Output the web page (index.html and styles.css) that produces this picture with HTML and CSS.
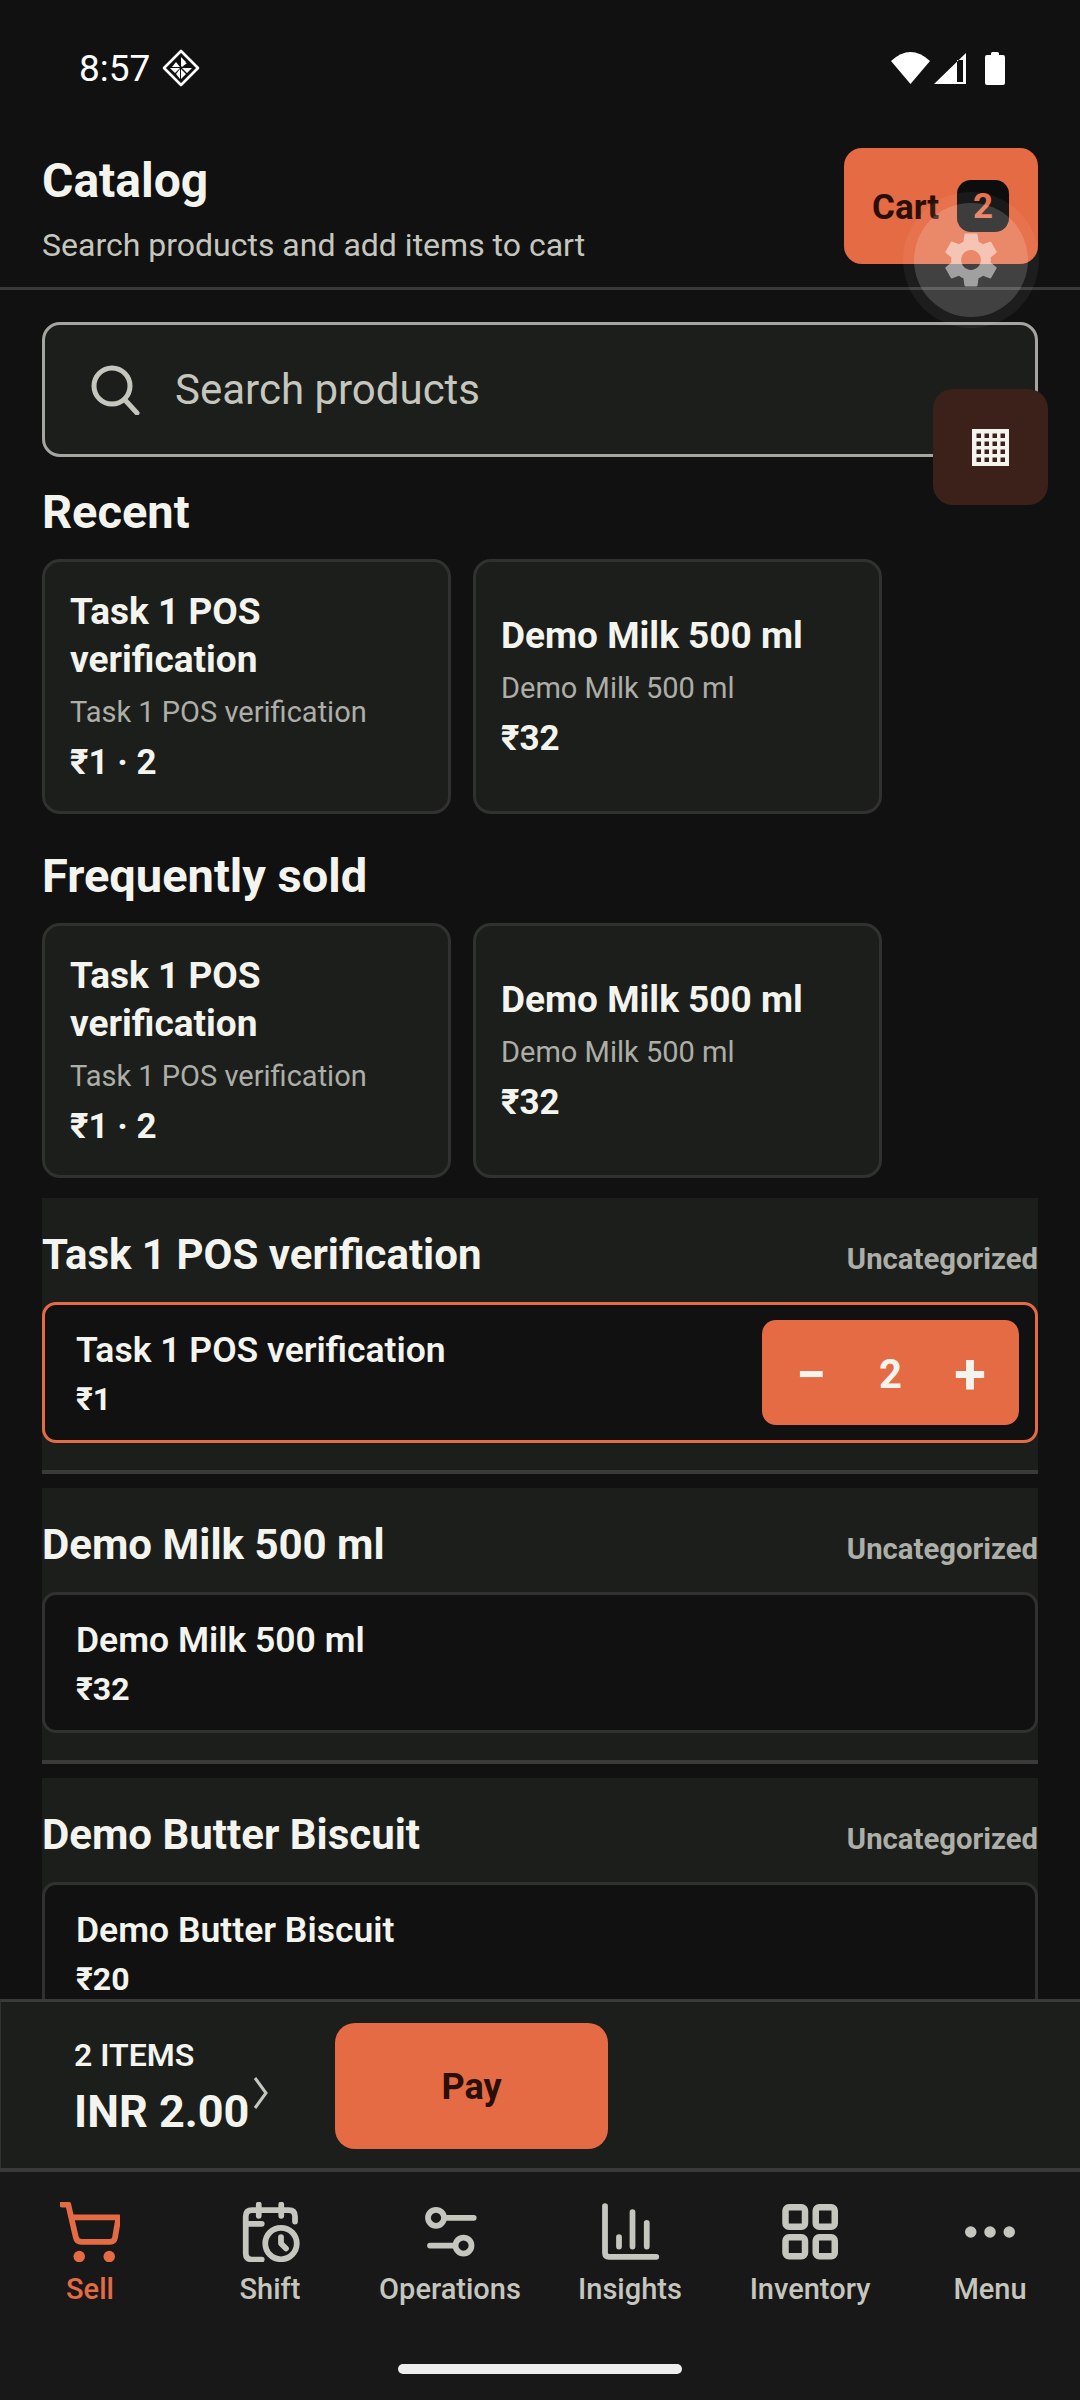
FILE: index.html
```html
<!DOCTYPE html>
<html>

<head>
    <title>Catalog</title>
    <link rel="stylesheet" href="styles.css">
</head>

<body>
    <div class="screen">
        <div class="status">
            <div class="status-left">
                <span class="clock">8:57</span>
                <svg class="status-logo" width="38" height="38" viewBox="0 0 38 38">
                    <path d="M19 2 36 19 19 36 2 19Z" fill="none" stroke="#fff" stroke-width="2.6" stroke-linejoin="round" />
                    <path d="M19 8 24 13 19 18ZM14 13 18 18H10ZM30 19 25 24 20 19ZM25 14 20 18V13ZM8 19H18L13 24ZM14 25 18 20V30ZM19 20 24 25 19 30Z" fill="#fff" />
                </svg>
            </div>
            <div class="status-right">
                <svg width="39" height="32" viewBox="0 0 39 32"><path d="M0 9Q19.5-9 39 9L19.5 32Z" fill="#fff" /></svg>
                <svg width="32" height="31" viewBox="0 0 32 31"><path d="M32 0V31H0ZM23 7V29H29V7Z" fill="#fff" fill-rule="evenodd" /></svg>
                <svg width="20" height="33" viewBox="0 0 20 33"><path d="M6 3V1.5Q6 0 7.500 0H12.500Q14 0 14 1.500V3H18Q20 3 20 5V31Q20 33 18 33H2Q0 33 0 31V5Q0 3 2 3Z" fill="#fff" /></svg>
            </div>
        </div>

        <header class="topbar">
            <div>
                <h1>Catalog</h1>
                <p class="subtitle">Search products and add items to cart</p>
            </div>
            <div class="cart-btn">
                <span>Cart</span>
                <span class="cart-count">2</span>
            </div>
        </header>

        <main class="content">
            <div class="search">
                <svg width="50" height="50" viewBox="0 0 50 50" fill="none" stroke="#c5c6be" stroke-width="5" stroke-linecap="round">
                    <circle cx="22" cy="21" r="18" />
                    <path d="M35 35 47 48" />
                </svg>
                <span>Search products</span>
            </div>

            <h2 class="shelf-title recent">Recent</h2>
            <div class="shelf">
                <div class="card">
                    <div class="card-name">Task 1 POS verification</div>
                    <div class="card-sub">Task 1 POS verification</div>
                    <div class="card-price">₹1 · 2</div>
                </div>
                <div class="card">
                    <div class="card-name">Demo Milk 500 ml</div>
                    <div class="card-sub">Demo Milk 500 ml</div>
                    <div class="card-price">₹32</div>
                </div>
            </div>

            <h2 class="shelf-title">Frequently sold</h2>
            <div class="shelf">
                <div class="card">
                    <div class="card-name">Task 1 POS verification</div>
                    <div class="card-sub">Task 1 POS verification</div>
                    <div class="card-price">₹1 · 2</div>
                </div>
                <div class="card">
                    <div class="card-name">Demo Milk 500 ml</div>
                    <div class="card-sub">Demo Milk 500 ml</div>
                    <div class="card-price">₹32</div>
                </div>
            </div>

            <section class="group">
                <div class="group-head">
                    <h3>Task 1 POS verification</h3>
                    <span>Uncategorized</span>
                </div>
                <div class="row row-active">
                    <div>
                        <div class="row-name">Task 1 POS verification</div>
                        <div class="row-price">₹1</div>
                    </div>
                    <div class="stepper">
                        <span class="step-minus">−</span>
                        <span class="step-num">2</span>
                        <span class="step-plus">+</span>
                    </div>
                </div>
            </section>

            <section class="group">
                <div class="group-head">
                    <h3>Demo Milk 500 ml</h3>
                    <span>Uncategorized</span>
                </div>
                <div class="row">
                    <div>
                        <div class="row-name">Demo Milk 500 ml</div>
                        <div class="row-price">₹32</div>
                    </div>
                </div>
            </section>

            <section class="group">
                <div class="group-head">
                    <h3>Demo Butter Biscuit</h3>
                    <span>Uncategorized</span>
                </div>
                <div class="row">
                    <div>
                        <div class="row-name">Demo Butter Biscuit</div>
                        <div class="row-price">₹20</div>
                    </div>
                </div>
            </section>
        </main>

        <div class="paybar">
            <div class="totals">
                <div class="totals-items">2 ITEMS</div>
                <div class="totals-amount">INR 2.00</div>
            </div>
            <svg class="chevron" width="18" height="32" viewBox="0 0 18 32" fill="none" stroke="#c5c6be" stroke-width="3">
                <path d="M3 1 14 16 3 31" />
            </svg>
            <div class="pay-btn">Pay</div>
        </div>

        <nav class="tabs">
            <div class="tab tab-on">
                <svg viewBox="0 0 24 24">
                    <path d="M.8 1H3.300L6.300 14Q6.700 15.900 8.500 15.900H20Q21.700 15.900 22 14.300L23.400 6.100H4.700" />
                    <circle class="dot" cx="7.700" cy="21.800" r="2.300" />
                    <circle class="dot" cx="19.700" cy="21.800" r="2.300" />
                </svg>
                <span>Sell</span>
            </div>
            <div class="tab">
                <svg viewBox="0 0 24 24">
                    <path d="M8.700 23H4.800Q2.300 23 2.300 20.500V5.700Q2.300 3.200 4.800 3.200H19.500Q22 3.200 22 5.700V7.800" />
                    <path d="M7.500 1V5.500M16.500 1V5.500M2.300 8.700H8.700" />
                    <circle cx="16.400" cy="16.600" r="6.300" />
                    <path d="M16.400 14V16.600L18.400 18.600" />
                </svg>
                <span>Shift</span>
            </div>
            <div class="tab">
                <svg viewBox="0 0 24 24">
                    <circle cx="6.400" cy="6.300" r="3.200" />
                    <path d="M10 6.300H21.500" />
                    <circle cx="17.400" cy="17.400" r="3.200" />
                    <path d="M4 17.400H14" />
                </svg>
                <span>Operations</span>
            </div>
            <div class="tab">
                <svg viewBox="0 0 24 24">
                    <path d="M2 1.600V20.300Q2 21.900 3.600 21.900H22.500" />
                    <path d="M7.600 14V17.800M13 4V17.800M18.700 8.300V17.800" />
                </svg>
                <span>Insights</span>
            </div>
            <div class="tab">
                <svg class="tab-grid" viewBox="0 0 24 24">
                    <rect x="2.200" y="2.100" width="7.800" height="7.800" rx="1.400" />
                    <rect x="14.300" y="2.100" width="7.600" height="7.800" rx="1.400" />
                    <rect x="2.200" y="14.100" width="7.800" height="7.600" rx="1.400" />
                    <rect x="14.300" y="14.100" width="7.600" height="7.600" rx="1.400" />
                </svg>
                <span>Inventory</span>
            </div>
            <div class="tab">
                <svg viewBox="0 0 24 24">
                    <circle class="dot" cx="4.300" cy="12" r="2.300" />
                    <circle class="dot" cx="12" cy="12" r="2.300" />
                    <circle class="dot" cx="19.700" cy="12" r="2.300" />
                </svg>
                <span>Menu</span>
            </div>
        </nav>

        <div class="home-bar"><div class="home-pill"></div></div>

        <!-- floating stuff on top of the page -->
        <div class="gear-fab">
            <div class="gear-inner">
                <svg width="66" height="66" viewBox="0 0 24 24">
                    <path d="M19.140 12.940c.04-.3.06-.61.06-.94 0-.32-.02-.64-.07-.94l2.030-1.580c.18-.14.23-.41.12-.61l-1.920-3.320c-.12-.22-.37-.29-.59-.22l-2.390.96c-.5-.38-1.030-.7-1.620-.94l-.36-2.540c-.04-.24-.24-.41-.48-.41h-3.840c-.24 0-.43.17-.47.41l-.36 2.540c-.59.24-1.130.57-1.620.94l-2.390-.96c-.22-.08-.47 0-.59.22L2.740 8.870c-.12.21-.08.47.12.61l2.030 1.580c-.05.3-.09.63-.09.94s.02.64.07.94l-2.030 1.580c-.18.14-.23.41-.12.61l1.920 3.320c.12.22.37.29.59.22l2.390-.96c.5.38 1.030.7 1.620.94l.36 2.540c.05.24.24.41.48.41h3.840c.24 0 .44-.17.47-.41l.36-2.540c.59-.24 1.130-.56 1.620-.94l2.390.96c.22.08.47 0 .59-.22l1.920-3.320c.12-.22.07-.47-.12-.61l-2.010-1.580zM12 15.600c-1.980 0-3.600-1.620-3.600-3.600s1.620-3.600 3.600-3.600 3.600 1.620 3.600 3.600-1.620 3.600-3.600 3.600z" fill="#fff" fill-opacity=".5" />
                </svg>
            </div>
        </div>
        <div class="grid-fab">
            <svg width="37" height="37" viewBox="0 0 37 37">
                <path fill="#f4f4ef" fill-rule="evenodd" d="M0 0H37V37H0ZM4.500 4.500V9H9V4.500ZM12.500 4.500V9H17V4.500ZM20.500 4.500V9H25V4.500ZM28.500 4.500V9H33V4.500ZM4.500 12.500V17H9V12.500ZM12.500 12.500V17H17V12.500ZM20.500 12.500V17H25V12.500ZM28.500 12.500V17H33V12.500ZM4.500 20.500V25H9V20.500ZM12.500 20.500V25H17V20.500ZM20.500 20.500V25H25V20.500ZM28.500 20.500V25H33V20.500ZM4.500 28.500V33H9V28.500ZM12.500 28.500V33H17V28.500ZM20.500 28.500V33H25V28.500ZM28.500 28.500V33H33V28.500Z" />
            </svg>
        </div>
    </div>
</body>

</html>
```

FILE: styles.css
```css
* {
    box-sizing: border-box;
}

html,
body {
    margin: 0;
    background: #111111;
}

.screen {
    position: relative;
    width: 1080px;
    height: 2400px;
    display: flex;
    flex-direction: column;
    overflow: hidden;
    background: #111111;
    color: #f4f4ef;
    font-family: Roboto, "Liberation Sans", sans-serif;
}

/* status bar */
.status {
    height: 100px;
    padding: 36px 75px 0 79px;
    display: flex;
    flex: none;
    justify-content: space-between;
}

.status-left,
.status-right {
    height: 64px;
    display: flex;
    align-items: center;
}

.status-left {
    gap: 12px;
}

.status-right {
    gap: 4px;
}

.status-right svg:last-child {
    margin-left: 15px;
}

.clock {
    font-size: 37px;
    color: #fff;
}

/* header */
.topbar {
    flex: none;
    height: 190px;
    padding: 48px 42px 23px;
    display: flex;
    justify-content: space-between;
    border-bottom: 3px solid #3a3b38;
}

h1 {
    margin: 6px 0 0;
    font-size: 48px;
    line-height: 54px;
    font-weight: 700;
}

.subtitle {
    margin: 18px 0 0;
    font-size: 32px;
    line-height: 38px;
    color: #c5c6be;
}

.cart-btn {
    width: 194px;
    height: 116px;
    padding: 2px 0 0 28px;
    display: flex;
    align-items: center;
    gap: 18px;
    background: #e56b45;
    border-radius: 18px;
    color: #2a0f08;
    font-size: 35px;
    font-weight: 700;
}

.cart-count {
    width: 52px;
    height: 52px;
    margin-top: -2px;
    display: flex;
    align-items: center;
    justify-content: center;
    border-radius: 14px;
    background: #0d0d0d;
    color: #e56b45;
}

/* scrolling part */
.content {
    flex: 1;
    min-height: 0;
    overflow: hidden;
    padding: 32px 42px 0;
}

.search {
    height: 135px;
    padding-left: 45px;
    display: flex;
    align-items: center;
    gap: 35px;
    background: #1c1e1b;
    border: 3px solid #a5a69f;
    border-radius: 18px;
    color: #c5c6be;
    font-size: 42px;
}

.shelf-title {
    margin: 36px 0 21px;
    font-size: 47px;
    line-height: 52px;
    font-weight: 700;
}

.shelf-title.recent {
    margin-top: 29px;
}

.shelf {
    display: flex;
    gap: 22px;
}

.card {
    width: 409px;
    height: 255px;
    padding: 0 25px;
    display: flex;
    flex-direction: column;
    justify-content: center;
    background: #1c1e1b;
    border: 3px solid #30322f;
    border-radius: 18px;
}

.card-name {
    font-size: 37px;
    line-height: 48px;
    font-weight: 700;
}

.card-sub {
    margin-top: 8px;
    font-size: 29px;
    line-height: 40px;
    color: #adaea7;
}

.card-price {
    margin-top: 9px;
    font-size: 35px;
    line-height: 44px;
    font-weight: 700;
}

.group {
    height: 276px;
    margin-top: 14px;
    background: #1c1e1b;
    border-bottom: 4px solid #3a3b38;
}

.shelf + .group {
    margin-top: 20px;
}

.group-head {
    height: 104px;
    padding-top: 29px;
    display: flex;
    justify-content: space-between;
    align-items: baseline;
}

h3 {
    margin: 0;
    font-size: 42px;
    line-height: 56px;
    font-weight: 700;
}

.group-head span {
    font-size: 29.3px;
    font-weight: 700;
    color: #adaea7;
}

.row {
    height: 141px;
    padding: 0 16px 0 31px;
    display: flex;
    align-items: center;
    justify-content: space-between;
    background: #111111;
    border: 3px solid #30322f;
    border-radius: 14px;
}

.row-active {
    border-color: #e56b45;
}

.row-name {
    font-size: 35.5px;
    line-height: 46px;
    font-weight: 600;
}

.row-price {
    margin-top: 7px;
    font-size: 32px;
    line-height: 38px;
    font-weight: 700;
}

.stepper {
    width: 257px;
    height: 105px;
    padding: 3px 29px 0;
    display: flex;
    align-items: center;
    justify-content: space-between;
    background: #e56b45;
    border-radius: 14px;
    font-weight: 700;
}

.stepper span {
    width: 40px;
    text-align: center;
}

.step-minus {
    font-size: 54px;
}

.step-plus {
    font-size: 58px;
}

.step-num {
    font-size: 40px;
}

/* pay bar */
.paybar {
    flex: none;
    height: 169px;
    padding-left: 73px;
    display: flex;
    align-items: center;
    background: #1c1e1b;
    border-top: 3px solid #3a3b38;
    border-left: 1px solid #30322f;
}

.totals {
    width: 178px;
    padding-top: 3px;
}

.totals-items {
    font-size: 32px;
    line-height: 40px;
    font-weight: 600;
}

.totals-amount {
    margin-top: 11px;
    font-size: 45px;
    line-height: 52px;
    font-weight: 700;
}

.chevron {
    margin-top: 16px;
}

.pay-btn {
    width: 273px;
    height: 126px;
    margin: 2px 0 0 65px;
    padding-top: 2px;
    display: flex;
    align-items: center;
    justify-content: center;
    background: #e56b45;
    border-radius: 20px;
    color: #2a0f08;
    font-size: 36px;
    font-weight: 700;
}

/* bottom nav */
.tabs {
    flex: none;
    height: 154px;
    display: flex;
    background: #181818;
    border-top: 4px solid #3a3b38;
}

.tab {
    width: 180px;
    padding-top: 30px;
    display: flex;
    flex-direction: column;
    align-items: center;
    color: #c5c6be;
    font-size: 29px;
    font-weight: 500;
}

.tab svg {
    width: 60px;
    height: 60px;
    margin-bottom: 10px;
    fill: none;
    stroke: #c5c6be;
    stroke-width: 2.300;
    stroke-linecap: round;
    stroke-linejoin: round;
}

.tab .tab-grid {
    stroke-width: 2.600;
}

.tab .dot {
    fill: #c5c6be;
    stroke: none;
}

.tab-on {
    color: #e56b45;
}

.tab-on svg {
    stroke: #e56b45;
}

.tab-on .dot {
    fill: #e56b45;
}

.home-bar {
    flex: none;
    height: 78px;
    padding-top: 42px;
    display: flex;
    justify-content: center;
    background: #181818;
}

.home-pill {
    width: 284px;
    height: 10px;
    border-radius: 5px;
    background: #eeeeee;
}

/* floating */
.gear-fab {
    position: absolute;
    left: 903px;
    top: 192px;
    width: 136px;
    height: 136px;
    padding: 11px;
    border-radius: 50%;
    background: rgba(255, 255, 255, 0.05);
}

.gear-inner {
    width: 114px;
    height: 114px;
    display: flex;
    align-items: center;
    justify-content: center;
    border-radius: 50%;
    background: rgba(255, 255, 255, 0.16);
}

.grid-fab {
    position: absolute;
    left: 933px;
    top: 389px;
    width: 115px;
    height: 116px;
    display: flex;
    align-items: center;
    justify-content: center;
    border-radius: 20px;
    background: #3c211b;
}
```
